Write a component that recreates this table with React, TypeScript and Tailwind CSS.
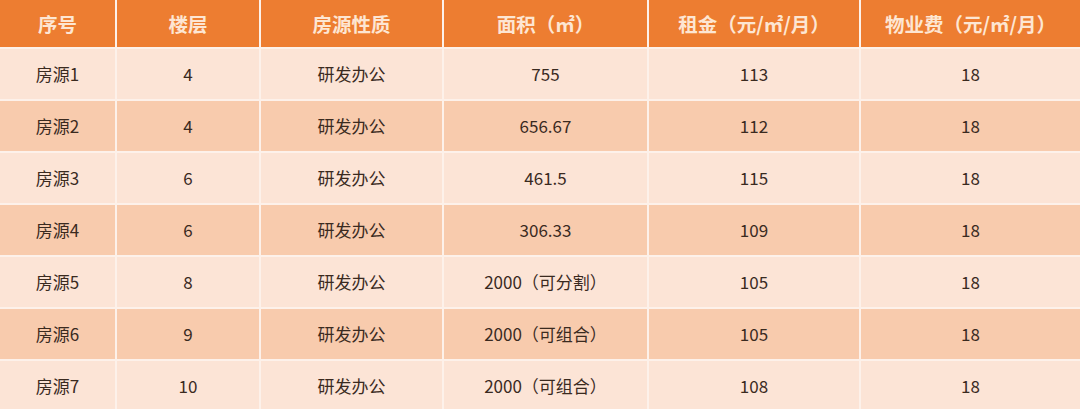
const headers = ['序号', '楼层', '房源性质', '面积（㎡）', '租金（元/㎡/月）', '物业费（元/㎡/月）'];

const rows = [
  ['房源1', '4', '研发办公', '755', '113', '18'],
  ['房源2', '4', '研发办公', '656.67', '112', '18'],
  ['房源3', '6', '研发办公', '461.5', '115', '18'],
  ['房源4', '6', '研发办公', '306.33', '109', '18'],
  ['房源5', '8', '研发办公', '2000（可分割）', '105', '18'],
  ['房源6', '9', '研发办公', '2000（可组合）', '105', '18'],
  ['房源7', '10', '研发办公', '2000（可组合）', '108', '18'],
];

export default function App() {
  return (
    <div
      className="w-[1080px] h-[409px] overflow-hidden bg-[#fdf1ea]"
      style={{ fontFamily: '"Noto Sans CJK SC", "Noto Sans", sans-serif' }}
    >
      <div className="grid grid-cols-[115px_142px_181px_203px_210px_219px] gap-[2px]">
        {headers.map((h) => (
          <div
            key={h}
            className="h-[47px] flex items-center justify-center bg-[#ed7d31] text-[#fde6d3] text-[19.5px] font-bold"
          >
            {h}
          </div>
        ))}
        {rows.map((row, i) =>
          row.map((cell, j) => (
            <div
              key={`${i}-${j}`}
              className={`h-[50px] flex items-center justify-center text-[17px] text-[#3a2a1f] ${
                i % 2 === 0 ? 'bg-[#fce4d6]' : 'bg-[#f8cbad]'
              }`}
            >
              {cell}
            </div>
          ))
        )}
      </div>
    </div>
  );
}
